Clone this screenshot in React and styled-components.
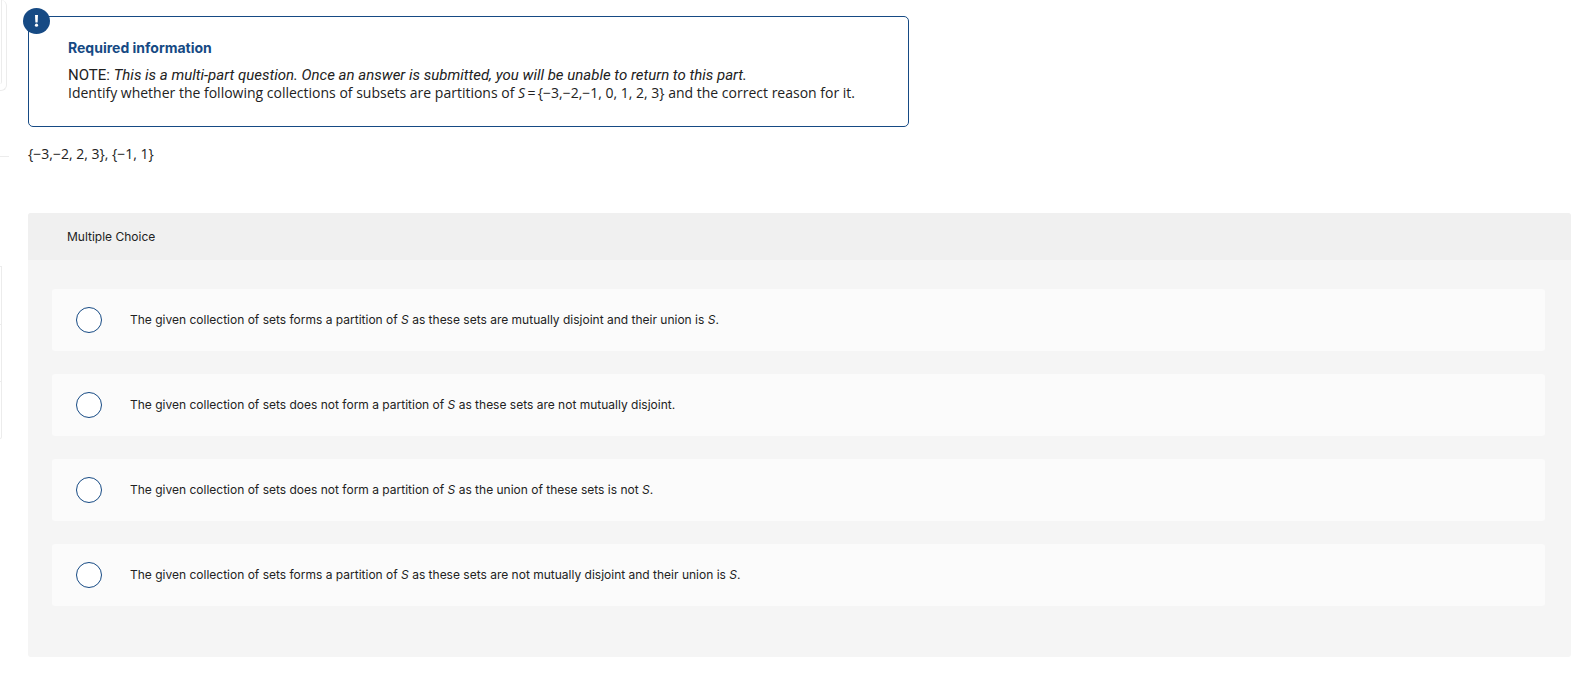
import React from 'react';
import styled, { createGlobalStyle } from 'styled-components';

const navy = '#164a84';
const rule = '#ececec';
const noteFont = 'Roboto, "Liberation Sans", sans-serif';
const textFont = '"Open Sans", "Liberation Sans", sans-serif';
const uiFont = 'Inter, "Liberation Sans", sans-serif';

const GlobalStyle = createGlobalStyle`
  *, *::before, *::after { box-sizing: border-box; }
  body { margin: 0; background: #fff; color: #222; font-family: ${textFont}; }
`;

const Page = styled.div`
  display: flex;
  align-items: flex-start;
`;

const Rail = styled.aside`
  flex: 0 0 28px;
  display: flex;
  flex-direction: column;
  align-items: flex-start;
`;

const RailCard = styled.div`
  width: 7px;
  height: 91px;
  padding-bottom: 6px;
  border: solid ${rule};
  border-width: 0 1px 1px 0;
  border-radius: 0 6px 6px 0;
`;

const RailCardInner = styled.div`
  width: 2px;
  height: 100%;
  border-right: 1px solid ${rule};
  border-radius: 0 0 2px 0;
`;

const RailRule = styled.div`
  width: 9px;
  height: 1px;
  margin: 65px 0 109px;
  background: ${rule};
`;

const RailList = styled.div`
  width: 2px;
  border: solid ${rule};
  border-width: 1px 1px 1px 0;
  border-radius: 0 0 2px 0;
`;

const RailListItem = styled.div`
  height: 57px;
  border-top: 1px solid ${rule};
  &:first-child { border-top: 0; }
`;

const Main = styled.main`
  flex: 1;
  min-width: 0;
  padding: 16px 10px 16px 0;
`;

const InfoBox = styled.section`
  position: relative;
  max-width: 881px;
  padding: 22px 24px 24px 39px;
  border: 1px solid ${navy};
  border-radius: 5px;
`;

const Badge = styled.span`
  position: absolute;
  top: -9px;
  left: -6px;
  width: 27px;
  height: 26px;
  border-radius: 50%;
  background: ${navy};
  display: flex;
  align-items: center;
  justify-content: center;
`;

const InfoTitle = styled.h2`
  margin: 0 0 9px;
  color: ${navy};
  font-family: ${uiFont};
  font-size: 14px;
  line-height: 18px;
  font-weight: 700;
`;

const NoteText = styled.p`
  margin: 0;
  font-family: ${noteFont};
  font-size: 15px;
  line-height: 18px;
`;

const InfoText = styled.p`
  margin: 0;
  font-size: 14px;
  line-height: 18px;
`;

const Prompt = styled(InfoText)`
  margin: 18px 0 50px;
`;

const Panel = styled.fieldset`
  min-width: 0;
  margin: 0;
  padding: 0 0 51px;
  border: 0;
  border-radius: 3px;
  background: #f5f5f5;
  font-family: ${uiFont};
  font-size: 12px;
  line-height: 18px;
`;

const PanelHeader = styled.legend`
  float: left;
  width: 100%;
  padding: 15px 39px 14px;
  border-radius: 3px 3px 0 0;
  background: #f0f0f0;
`;

const Choices = styled.div`
  clear: both;
  display: flex;
  flex-direction: column;
  gap: 23px;
  padding: 29px 26px 0 24px;
`;

const Choice = styled.label`
  display: flex;
  align-items: center;
  gap: 28px;
  min-height: 62px;
  padding: 0 24px;
  border-radius: 3px;
  background: #fbfbfb;
  cursor: pointer;
`;

const Radio = styled.input`
  appearance: none;
  flex: none;
  width: 26px;
  height: 26px;
  margin: 0;
  border: 1px solid ${navy};
  border-radius: 50%;
  background: #fff;
  cursor: pointer;
  &:checked { background: ${navy}; box-shadow: inset 0 0 0 5px #fff; }
`;

const choices = [
  <>The given collection of sets forms a partition of <i>S</i> as these sets are mutually disjoint and their union is <i>S</i>.</>,
  <>The given collection of sets does not form a partition of <i>S</i> as these sets are not mutually disjoint.</>,
  <>The given collection of sets does not form a partition of <i>S</i> as the union of these sets is not <i>S</i>.</>,
  <>The given collection of sets forms a partition of <i>S</i> as these sets are not mutually disjoint and their union is <i>S</i>.</>,
];

export default function App() {
  return (
    <>
      <GlobalStyle />
      <Page>
        <Rail>
          <RailCard><RailCardInner /></RailCard>
          <RailRule />
          <RailList>
            <RailListItem />
            <RailListItem />
            <RailListItem />
          </RailList>
        </Rail>
        <Main>
          <InfoBox>
            <Badge>
              <svg width="5" height="12" viewBox="0 0 5 12" aria-hidden="true">
                <path d="M1 0h3l-.4 7.6H1.4z" fill="#fff" />
                <circle cx="2.5" cy="10.2" r="1.6" fill="#fff" />
              </svg>
            </Badge>
            <InfoTitle>Required information</InfoTitle>
            <NoteText>
              NOTE: <i>This is a multi-part question. Once an answer is submitted, you will be unable to return to this part.</i>
            </NoteText>
            <InfoText>
              Identify whether the following collections of subsets are partitions of <i>S</i>{'\u2009=\u2009{−3,−2,−1, 0, 1, 2, 3}'} and the correct reason for it.
            </InfoText>
          </InfoBox>
          <Prompt>{'{−3,−2, 2, 3}, {−1, 1}'}</Prompt>
          <Panel>
            <PanelHeader>Multiple Choice</PanelHeader>
            <Choices>
              {choices.map((text, i) => (
                <Choice key={i}>
                  <Radio type="radio" name="answer" value={i} />
                  <span>{text}</span>
                </Choice>
              ))}
            </Choices>
          </Panel>
        </Main>
      </Page>
    </>
  );
}
